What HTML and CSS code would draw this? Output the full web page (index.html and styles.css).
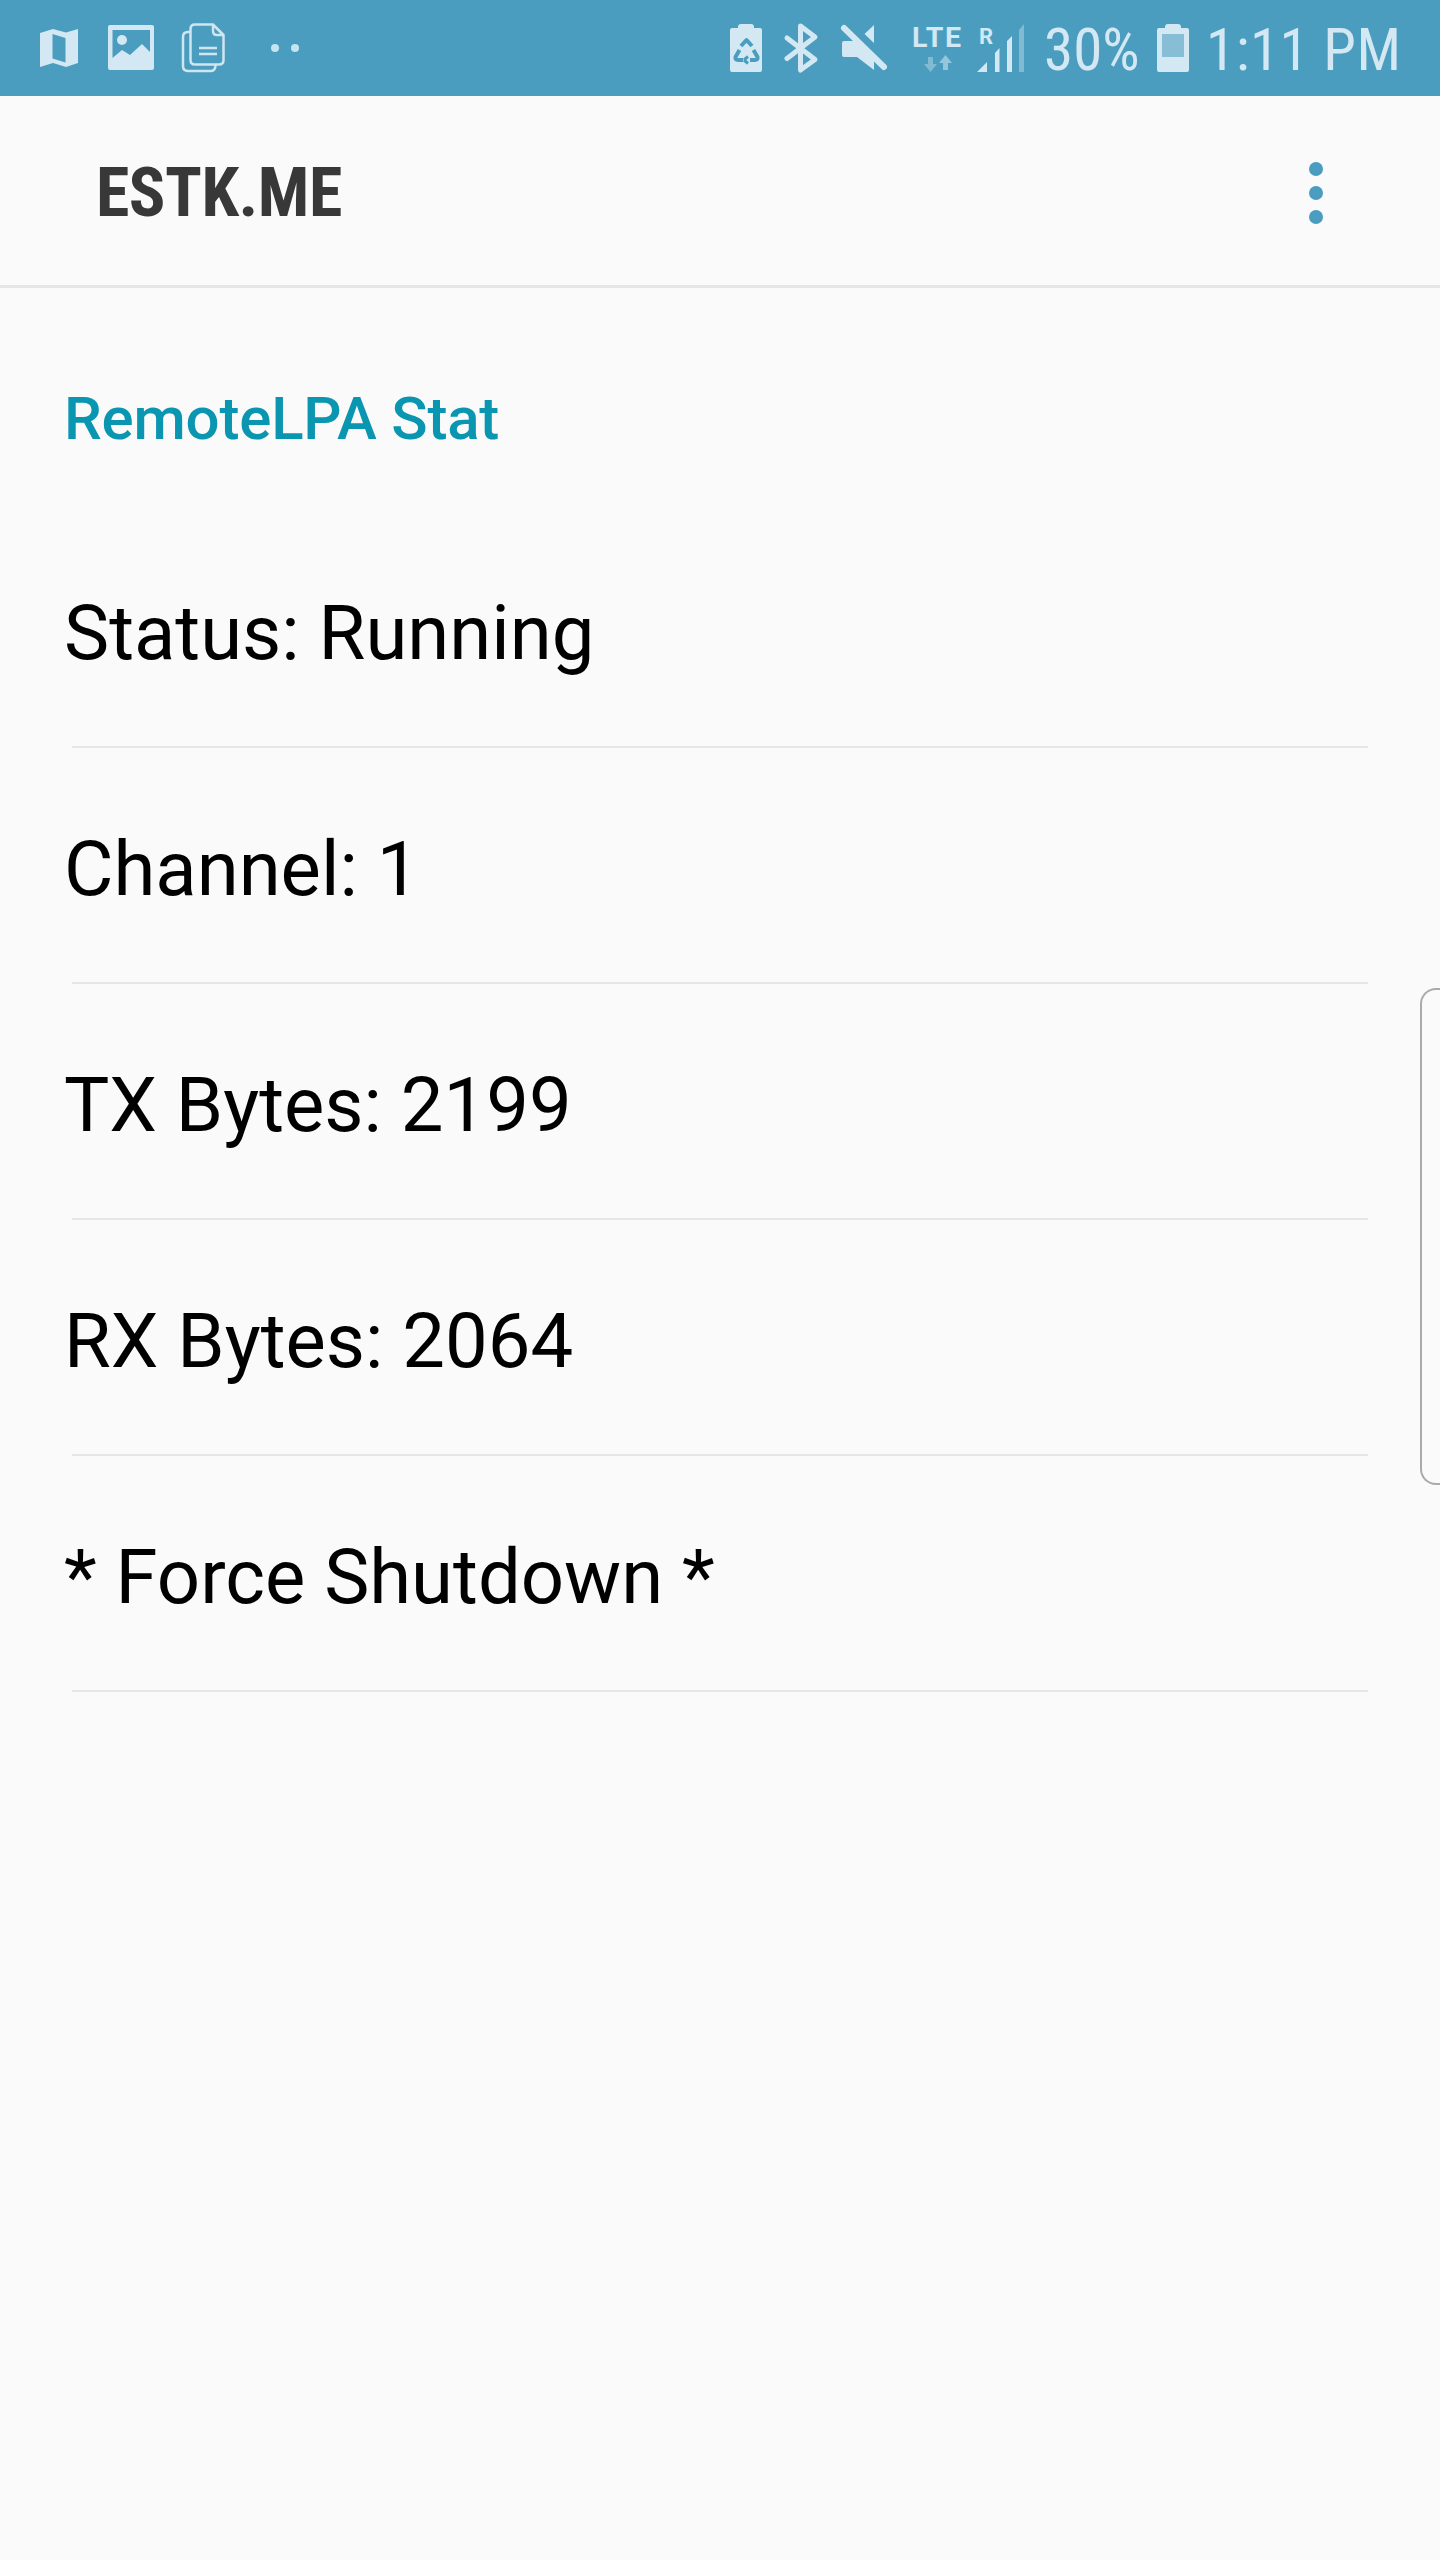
FILE: index.html
```html
<!DOCTYPE html>
<html lang="en">
<head>
<meta charset="utf-8">
<title>ESTK.ME</title>
<link rel="stylesheet" href="styles.css">
</head>
<body>
<div class="status-bar">
  <svg class="notif-icons" width="260" height="96" viewBox="40 0 260 96">
    <path class="ico" fill-rule="evenodd" d="M40 33 L53 29 L66 32.5 L78 29 V63 L66 67 L53 63 L40 67 Z M52.500 34 V58.500 L65.500 62.500 V38 Z"/>
    <path class="ico" fill-rule="evenodd" d="M110 25 H152 Q154 25 154 27 V68 Q154 70 152 70 H110 Q108 70 108 68 V27 Q108 25 110 25 Z M112.500 30 V58 L122 50 L130 55 L142 44 L150 52 V30 Z"/>
    <circle class="ico" cx="122" cy="40" r="5"/>
    <path class="line" d="M190 32 H188 Q183 32 183 37 V66 Q183 71 188 71 H211 Q215.500 71 215.500 65"/>
    <path class="line" d="M213 24.500 H195 Q190.500 24.500 190.500 29 V60 Q190.500 64.500 195 64.500 H219 Q223.500 64.500 223.500 60 V35 Z M213 24.500 V31 Q213 35 217 35 H223.500"/>
    <path class="line" d="M199 48 H217 M199 54 H217"/>
    <circle class="dot" cx="275" cy="48" r="4"/>
    <circle class="dot" cx="295" cy="48" r="4"/>
  </svg>
  <svg class="sys-icons" width="294" height="96" viewBox="730 0 294 96">
    <path class="ico" d="M738 27 Q738 24 741 24 H751 Q754 24 754 27 V28 H760 Q762 28 762 30 V70 Q762 72 760 72 H732 Q730 72 730 70 V30 Q730 28 732 28 H738 Z"/>
    <path class="cut" d="M741 46 L746.500 40 L752 46 M739.500 50 L735.500 57 Q735 60 738 60 H743 M753.500 50 L757.500 57 Q758 60 755 60 H750"/>
    <path class="cut-thin" d="M744 60 L748 56.500 M744 60 L748 63.500"/>
    <path class="bt" d="M787 38 L815 59.500 L800.500 70 V26 L815 37 L787 58.500"/>
    <path class="ico" d="M844 41 H857 L874 25 V70 L857 57 H844 Q842 57 842 55 V43 Q842 41 844 41 Z"/>
    <path class="slash-cut" d="M845 21 L890 64"/>
    <path class="slash" d="M844 28 L884 67"/>
    <text class="lte" x="912" y="47">LTE</text>
    <path class="arrow-dim" d="M928 57 H933 V64 H937 L930.500 72 L924 64 H928 Z"/>
    <path class="arrow-mid" d="M943 70 H948 V63 H952 L945.500 55 L939 63 H943 Z"/>
    <text class="roam" x="979" y="44">R</text>
    <path class="ico" d="M977 72 L987 62 V72 Z M995 53 L999.500 48 V72 H995 Z M1007 41 L1012 36 V72 H1007 Z"/>
    <path class="bar-off" d="M1019 30 L1024 24 V72 H1019 Z"/>
  </svg>
  <span class="pct">30%</span>
  <svg class="batt" width="32" height="96" viewBox="1157 0 32 96">
    <path class="ico" d="M1165 27 Q1165 24 1168 24 H1178 Q1181 24 1181 27 V28 H1187 Q1189 28 1189 30 V70 Q1189 72 1187 72 H1159 Q1157 72 1157 70 V30 Q1157 28 1159 28 H1165 Z"/>
    <rect class="batt-empty" x="1162" y="34" width="22" height="23"/>
  </svg>
  <span class="clock">1:11 PM</span>
</div>

<header class="app-bar">
  <h1 class="app-title">ESTK.ME</h1>
  <div class="overflow-menu"><i></i><i></i><i></i></div>
</header>

<main>
  <h2 class="section-title">RemoteLPA Stat</h2>
  <ul class="stat-list">
    <li class="stat-row"><span class="stat-label">Status: Running</span></li>
    <li class="stat-row"><span class="stat-label">Channel: 1</span></li>
    <li class="stat-row"><span class="stat-label">TX Bytes: 2199</span></li>
    <li class="stat-row"><span class="stat-label">RX Bytes: 2064</span></li>
    <li class="stat-row"><span class="stat-label">* Force Shutdown *</span></li>
  </ul>
</main>

<div class="edge-handle"></div>
</body>
</html>
```
FILE: styles.css
```css
* { box-sizing: border-box; }
html, body { margin: 0; padding: 0; }
body {
  width: 1440px;
  height: 2560px;
  background: #fafafa;
  font-family: Roboto, "Liberation Sans", sans-serif;
  overflow: hidden;
  position: relative;
}

/* status bar */
.status-bar {
  height: 96px;
  background: #4a9dbf;
  display: flex;
  align-items: center;
  padding-left: 40px;
  color: #d3e8f2;
}
.status-bar svg { display: block; flex: none; }
.notif-icons { margin-right: 430px; }
.ico { fill: #d3e8f2; }
.line { fill: none; stroke: #cfe6f1; stroke-width: 2.5; stroke-linejoin: round; }
.dot { fill: #c4e4f3; }
.cut { fill: none; stroke: #4a9dbf; stroke-width: 4; stroke-linejoin: round; }
.cut-thin { fill: none; stroke: #4a9dbf; stroke-width: 3; }
.bt { fill: none; stroke: #d3e8f2; stroke-width: 5; stroke-linejoin: round; stroke-linecap: round; }
.slash-cut { fill: none; stroke: #4a9dbf; stroke-width: 8; }
.slash { fill: none; stroke: #d3e8f2; stroke-width: 6; stroke-linecap: round; }
.lte { font: 700 28.500px Roboto, sans-serif; letter-spacing: 1.5px; fill: #d3e8f2; }
.roam { font: 700 22px Roboto, sans-serif; fill: #d3e8f2; }
.arrow-dim { fill: #d3e8f2; opacity: 0.4; }
.arrow-mid { fill: #d3e8f2; opacity: 0.55; }
.bar-off { fill: #d3e8f2; opacity: 0.4; }
.batt-empty { fill: #88bdd6; }
.pct, .clock {
  font-size: 59px;
  font-weight: 400;
  font-stretch: 75%;
  line-height: 96px;
  white-space: nowrap;
  padding-top: 4px;
}
.pct { margin-left: 20px; width: 113px; }
.clock { margin-left: 17px; letter-spacing: 0.5px; }

/* app bar */
.app-bar {
  height: 192px;
  border-bottom: 3px solid #e6e6e6;
  display: flex;
  align-items: center;
  justify-content: space-between;
  padding: 5px 0 0 96px;
}
.app-title {
  margin: 0;
  font-size: 68px;
  font-weight: 700;
  color: #383838;
  font-stretch: 75%;
  letter-spacing: -0.5px;
}
.overflow-menu {
  display: flex;
  flex-direction: column;
  gap: 10px;
  margin-right: 117px;
  margin-bottom: 1px;
}
.overflow-menu i {
  display: block;
  width: 14px;
  height: 14px;
  border-radius: 50%;
  background: #4a9dbf;
}

/* content */
.section-title {
  margin: 0;
  height: 224px;
  padding: 93px 0 0 64px;
  font-size: 60px;
  line-height: 76px;
  font-weight: 500;
  letter-spacing: -0.2px;
  color: #0a96b0;
}
.stat-list { list-style: none; margin: 0; padding: 0; }
.stat-row {
  height: 236px;
  display: flex;
  flex-direction: column;
}
.stat-row::after {
  content: "";
  display: block;
  height: 2px;
  margin: 0 72px;
  background: #e6e6e6;
}
.stat-label {
  flex: 1;
  display: flex;
  align-items: center;
  padding: 8px 0 0 64px;
  font-size: 76px;
  color: #000;
}

/* edge panel handle */
.edge-handle {
  position: absolute;
  top: 988px;
  right: 0;
  width: 20px;
  height: 497px;
  border: 2px solid #aaa;
  border-right: 0;
  border-radius: 16px 0 0 16px;
}
```
